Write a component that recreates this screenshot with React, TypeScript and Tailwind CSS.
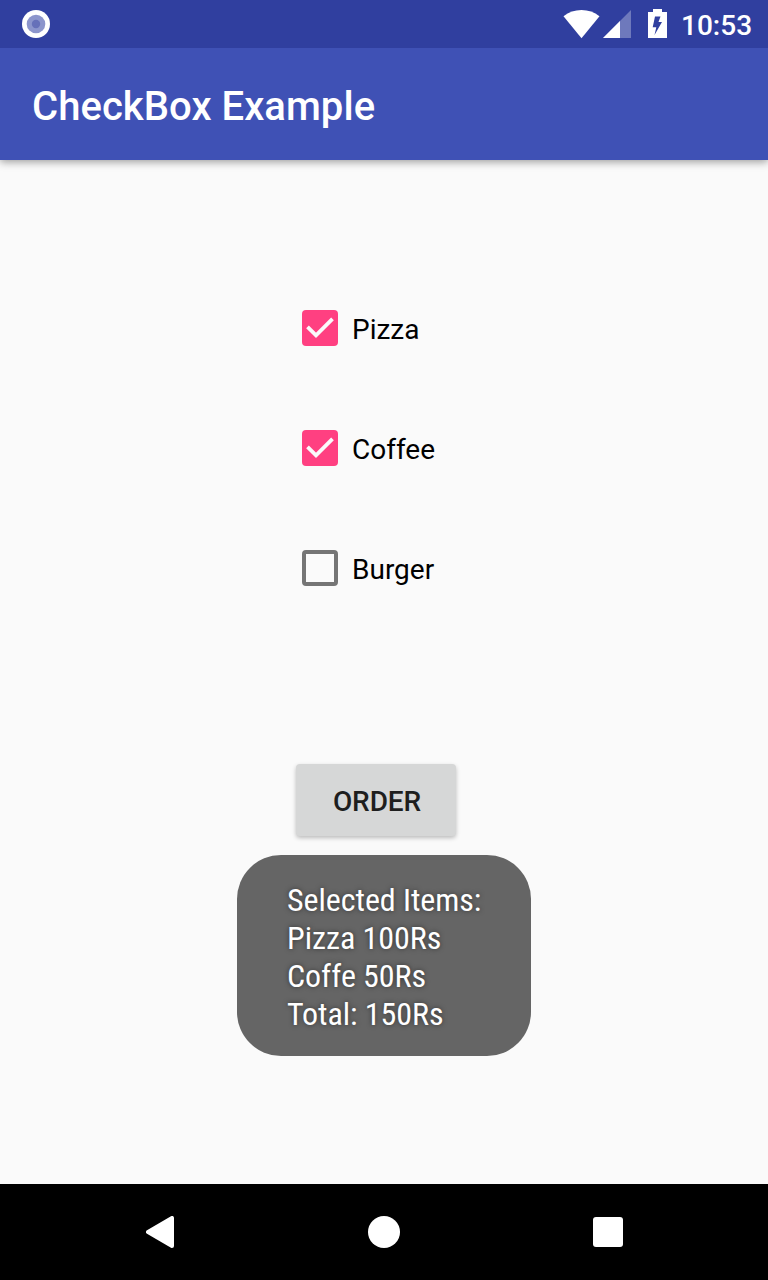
import { useState } from "react";

function StatusBar() {
  return (
    <div className="relative z-10 flex h-12 items-center justify-between bg-[#303f9f] pl-[22px] pr-[18px]">
      <svg width="28" height="28" viewBox="0 0 28 28">
        <circle cx="14" cy="14" r="14" fill="#fff" />
        <circle cx="14" cy="14" r="9.3" fill="#8c95cc" />
        <circle cx="14" cy="14" r="4.2" fill="#6670b9" />
      </svg>
      <div className="flex h-12 items-center">
        <svg width="37" height="30" viewBox="0 0 37 30">
          <path d="M.5 7.200C5.700 3 11.700 1 18.500 1s12.800 2 18 6.200L18.500 29.200Z" fill="#fff" />
        </svg>
        <svg className="ml-[3px]" width="28" height="28" viewBox="0 0 28 28">
          <path d="M28 0V28H0Z" fill="#fff" fillOpacity=".3" />
          <path d="M17 11V28H0Z" fill="#fff" />
        </svg>
        <svg className="mb-px ml-[17px] mr-[14px]" width="19" height="29" viewBox="0 0 19 29">
          <path d="M5 0h9v3h5v26H0V3h5Z" fill="#fff" />
          <path d="M7 7.500h5.500l-2 5.500H14L6.500 26l1.800-7.700H4.700Z" fill="#303f9f" />
        </svg>
        <span className="w-[69px] whitespace-nowrap pt-[3px] text-[28px] font-medium leading-[33px] text-white">10:53</span>
      </div>
    </div>
  );
}

function CheckItem({ label, initial }: { label: string; initial: boolean }) {
  const [checked, setChecked] = useState(initial);
  return (
    <button
      role="checkbox"
      aria-checked={checked}
      onClick={() => setChecked(!checked)}
      className="flex h-9 items-center gap-[14px] self-start"
    >
      <svg width="36" height="36" viewBox="0 0 36 36">
        {checked ? (
          <>
            <rect width="36" height="36" rx="4" fill="#ff4081" />
            <path d="m5.500 16.800 8.500 8.500L30.500 8.800" fill="none" stroke="#fafafa" strokeWidth="3.800" />
          </>
        ) : (
          <rect x="2" y="2" width="32" height="32" rx="2" fill="none" stroke="#757575" strokeWidth="4" />
        )}
      </svg>
      <span className="pt-[3px] text-[28px] leading-[33px] text-black">{label}</span>
    </button>
  );
}

const toastLines = ["Selected Items:", "Pizza 100Rs", "Coffe 50Rs", "Total: 150Rs"];

export default function App() {
  return (
    <div className="relative flex h-[1280px] w-[768px] flex-col overflow-hidden bg-[#fafafa] font-['Roboto',sans-serif]">
      <StatusBar />
      <header className="flex h-28 items-center bg-[#3f51b5] pl-8 pt-[4px] shadow-[0_2px_8px_rgba(0,0,0,0.38)]">
        <h1 className="text-[40px] font-medium leading-[47px] tracking-[0.05px] text-white">CheckBox Example</h1>
      </header>
      <main className="flex flex-1 flex-col pt-[150px]">
        <div className="ml-[302px] flex flex-col gap-[84px]">
          <CheckItem label="Pizza" initial={true} />
          <CheckItem label="Coffee" initial={true} />
          <CheckItem label="Burger" initial={false} />
        </div>
        <button className="ml-[296px] mt-[178px] h-[72px] w-40 rounded-[4px] bg-[#d6d7d7] pl-[2px] pt-[3px] text-[28px] font-medium leading-[33px] tracking-[-0.1px] text-[#1e1e1e] shadow-[0_2px_4px_rgba(0,0,0,0.25)]">
          ORDER
        </button>
      </main>
      <nav className="flex h-24 items-center bg-black pl-[146px]">
        <svg width="28" height="32" viewBox="0 0 28 32">
          <path d="M2 16 26 2V30Z" fill="#fff" stroke="#fff" strokeWidth="4" strokeLinejoin="round" />
        </svg>
        <span className="ml-[194px] size-8 rounded-full bg-white" />
        <span className="ml-[193px] size-[30px] rounded-[3px] bg-white" />
      </nav>
      <div className="absolute left-[237px] top-[855px] h-[201px] w-[294px] rounded-[44px] bg-[#656565] pl-[50px] pt-[26px] font-['Roboto_Condensed','Roboto',sans-serif] text-[32px] leading-[38px] tracking-[-0.05px] text-white [font-stretch:75%] [text-shadow:0_0_5px_rgba(0,0,0,0.5)]">
        {toastLines.map((line) => (
          <p key={line} className="whitespace-nowrap">{line}</p>
        ))}
      </div>
    </div>
  );
}
